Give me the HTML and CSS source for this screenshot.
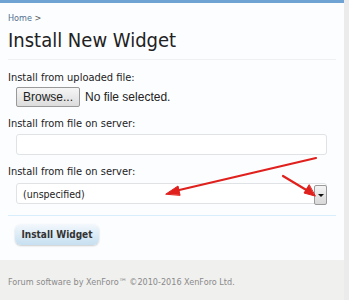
FILE: index.html
```html
<!DOCTYPE html>
<html lang="en">
<head>
    <meta charset="UTF-8">
    <title>Install New Widget</title>
    <link rel="stylesheet" href="styles.css">
</head>
<body>
<div class="page">
    <div class="content">
        <div class="breadcrumb"><a href="#">Home</a> &gt;</div>
        <h1>Install New Widget</h1>

        <form class="form">
            <div class="row">
                <label>Install from uploaded file:</label>
                <div class="file">
                    <span class="browse">Browse...</span>
                    <span class="nofile">No file selected.</span>
                </div>
            </div>
            <div class="row">
                <label>Install from file on server:</label>
                <input type="text" class="textbox">
            </div>
            <div class="row">
                <label>Install from file on server:</label>
                <div class="select">
                    <span>(unspecified)</span>
                    <span class="drop"></span>
                </div>
            </div>
            <div class="submit">
                <button type="button">Install Widget</button>
            </div>
        </form>
    </div>
    <footer>Forum software by XenForo&trade; &copy;2010-2016 XenForo Ltd.</footer>

    <svg class="arrows" width="344" height="300" viewBox="0 0 344 300">
        <g stroke="#e0201c" stroke-width="2.2" fill="#e0201c" stroke-linecap="round">
            <line x1="316" y1="158" x2="175" y2="191"/>
            <polygon points="166,194 178,186 180,195" stroke-width="1"/>
            <line x1="283" y1="176" x2="308" y2="191"/>
            <polygon points="315,196 304,193 309,185" stroke-width="1"/>
        </g>
    </svg>
</div>
</body>
</html>
```

FILE: styles.css
```css
body {
    margin: 0;
    background-color: #ebebeb;
    font-family: "DejaVu Sans Condensed", "DejaVu Sans", sans-serif;
    color: #333;
}

.page {
    position: relative;
    width: 344px;
    height: 300px;
    background-color: #fcfdff;
    border-top: 3px solid #6ea3d4;
    box-sizing: border-box;
    display: flex;
    flex-direction: column;
}

.content {
    padding: 0 8px;
    flex: 1;
}

.breadcrumb {
    font-size: 9px;
    color: #555;
    margin-top: 10px;
}

.breadcrumb a {
    color: #50708f;
    text-decoration: none;
}

h1 {
    font-size: 20px;
    font-weight: normal;
    color: #222;
    margin: 5px 0 0;
    padding-bottom: 7px;
    border-bottom: 1px solid #eef1f3;
}

.form {
    padding-top: 11px;
}

.row label {
    display: block;
    font-size: 11px;
    color: #222;
}

.row {
    margin-bottom: 10px;
}

.file {
    display: flex;
    align-items: center;
    gap: 5px;
    margin: 3px 0 0 8px;
    font-family: "Liberation Sans", Arial, sans-serif;
    font-size: 12px;
}

.browse {
    border: 1px solid #999;
    border-radius: 2px;
    background: linear-gradient(#f6f6f6, #dcdcdc);
    padding: 2px 6px;
    color: #222;
}

.nofile {
    color: #222;
}

.textbox {
    display: block;
    box-sizing: border-box;
    width: 311px;
    height: 21px;
    margin: 4px 0 0 8px;
    border: 1px solid #dfe3e6;
    border-radius: 3px;
    background: #fff;
}

.select {
    display: flex;
    align-items: center;
    justify-content: space-between;
    box-sizing: border-box;
    width: 311px;
    height: 21px;
    margin: 5px 0 0 8px;
    padding-left: 6px;
    border: 1px solid #dfe3e6;
    border-radius: 3px;
    background: #fff;
    font-size: 10.5px;
    color: #222;
}

.drop {
    position: relative;
    width: 13px;
    height: 20px;
    margin-top: 3px;
    margin-right: -1px;
    border: 1px solid #9a9a9a;
    border-radius: 2px;
    background: linear-gradient(#f4f4f4, #d8d8d8);
    box-sizing: border-box;
}

.drop::after {
    content: "";
    position: absolute;
    left: 3px;
    top: 8px;
    border-left: 3px solid transparent;
    border-right: 3px solid transparent;
    border-top: 3px solid #111;
}

.submit {
    border-top: 1px solid #d9eefb;
    margin-top: 11px;
    padding: 7px 0 0 7px;
}

.submit button {
    width: 84px;
    height: 21px;
    border: none;
    border-radius: 6px;
    background: linear-gradient(#f3f8fc, #c6dff0);
    box-shadow: 0 1px 2px rgba(0, 0, 0, 0.2);
    font-family: "DejaVu Sans Condensed", sans-serif;
    font-size: 10px;
    font-weight: bold;
    white-space: nowrap;
    padding: 0;
    color: #333;
}

footer {
    height: 40px;
    background-color: #f0f0ef;
    padding: 0 8px;
    font-size: 9px;
    color: #8a8a8a;
    line-height: 44px;
}

.arrows {
    position: absolute;
    top: -3px;
    left: 0;
    pointer-events: none;
}
```
